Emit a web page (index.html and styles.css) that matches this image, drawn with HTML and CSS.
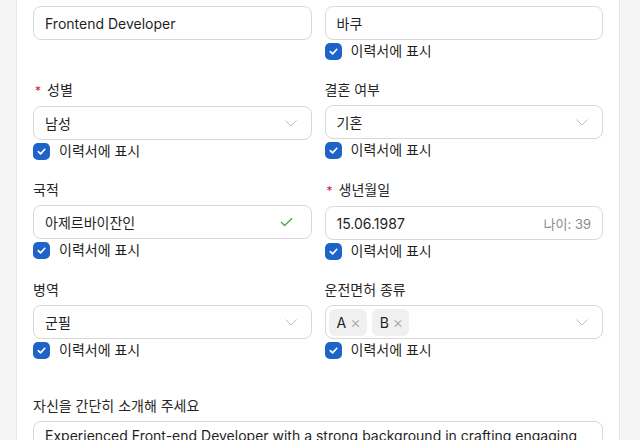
FILE: index.html
```html
<!DOCTYPE html>
<html lang="ko">
<head>
  <meta charset="UTF-8" />
  <meta name="viewport" content="width=device-width, initial-scale=1.0"/>
  <title>이력서 편집</title>
  <link rel="stylesheet" href="styles.css">
</head>
<body>

  <div class="page">
    <section class="card">

      <div class="grid">
        <div class="field">
          <div class="control">
            <span class="value">Frontend Developer</span>
          </div>
        </div>

        <div class="field">
          <div class="control">
            <span class="value">바쿠</span>
          </div>
          <div class="show"><span class="box"><svg viewBox="0 0 12 12" width="11" height="11"><path d="M2.5 6.2 L5 8.6 L9.6 3.6" fill="none" stroke="#fff" stroke-width="1.8" stroke-linecap="round" stroke-linejoin="round"/></svg></span>이력서에 표시</div>
        </div>

        <div class="field">
          <label><span class="req">*</span>성별</label>
          <div class="control">
            <span class="value">남성</span>
            <svg class="chev" viewBox="0 0 12 7" width="12" height="7"><path d="M0.5 0.5 L6 6 L11.5 0.5" fill="none" stroke="#bfbfbf" stroke-width="1"/></svg>
          </div>
          <div class="show"><span class="box"><svg viewBox="0 0 12 12" width="11" height="11"><path d="M2.5 6.2 L5 8.6 L9.6 3.6" fill="none" stroke="#fff" stroke-width="1.8" stroke-linecap="round" stroke-linejoin="round"/></svg></span>이력서에 표시</div>
        </div>

        <div class="field">
          <label>결혼 여부</label>
          <div class="control">
            <span class="value">기혼</span>
            <svg class="chev" viewBox="0 0 12 7" width="12" height="7"><path d="M0.5 0.5 L6 6 L11.5 0.5" fill="none" stroke="#bfbfbf" stroke-width="1"/></svg>
          </div>
          <div class="show"><span class="box"><svg viewBox="0 0 12 12" width="11" height="11"><path d="M2.5 6.2 L5 8.6 L9.6 3.6" fill="none" stroke="#fff" stroke-width="1.8" stroke-linecap="round" stroke-linejoin="round"/></svg></span>이력서에 표시</div>
        </div>

        <div class="field">
          <label>국적</label>
          <div class="control">
            <span class="value">아제르바이잔인</span>
            <svg class="ok" viewBox="0 0 14 10" width="13" height="10"><path d="M1 5 L5 8.8 L13 1" fill="none" stroke="#52a447" stroke-width="1.4"/></svg>
          </div>
          <div class="show"><span class="box"><svg viewBox="0 0 12 12" width="11" height="11"><path d="M2.5 6.2 L5 8.6 L9.6 3.6" fill="none" stroke="#fff" stroke-width="1.8" stroke-linecap="round" stroke-linejoin="round"/></svg></span>이력서에 표시</div>
        </div>

        <div class="field">
          <label><span class="req">*</span>생년월일</label>
          <div class="control">
            <span class="value">15.06.1987</span>
            <span class="suffix">나이: 39</span>
          </div>
          <div class="show"><span class="box"><svg viewBox="0 0 12 12" width="11" height="11"><path d="M2.5 6.2 L5 8.6 L9.6 3.6" fill="none" stroke="#fff" stroke-width="1.8" stroke-linecap="round" stroke-linejoin="round"/></svg></span>이력서에 표시</div>
        </div>

        <div class="field">
          <label>병역</label>
          <div class="control">
            <span class="value">군필</span>
            <svg class="chev" viewBox="0 0 12 7" width="12" height="7"><path d="M0.5 0.5 L6 6 L11.5 0.5" fill="none" stroke="#bfbfbf" stroke-width="1"/></svg>
          </div>
          <div class="show"><span class="box"><svg viewBox="0 0 12 12" width="11" height="11"><path d="M2.5 6.2 L5 8.6 L9.6 3.6" fill="none" stroke="#fff" stroke-width="1.8" stroke-linecap="round" stroke-linejoin="round"/></svg></span>이력서에 표시</div>
        </div>

        <div class="field">
          <label>운전면허 종류</label>
          <div class="control tags">
            <span class="tag">A<span class="x">×</span></span>
            <span class="tag">B<span class="x">×</span></span>
            <svg class="chev" viewBox="0 0 12 7" width="12" height="7"><path d="M0.5 0.5 L6 6 L11.5 0.5" fill="none" stroke="#bfbfbf" stroke-width="1"/></svg>
          </div>
          <div class="show"><span class="box"><svg viewBox="0 0 12 12" width="11" height="11"><path d="M2.5 6.2 L5 8.6 L9.6 3.6" fill="none" stroke="#fff" stroke-width="1.8" stroke-linecap="round" stroke-linejoin="round"/></svg></span>이력서에 표시</div>
        </div>
      </div>

      <div class="field about">
        <label>자신을 간단히 소개해 주세요</label>
        <div class="textarea">Experienced Front-end Developer with a strong background in crafting engaging</div>
      </div>

    </section>
  </div>

</body>
</html>
```

FILE: styles.css
```css
body {
  margin: 0;
  background-color: #f5f5f5;
  font-family: Inter, "Noto Sans CJK KR", sans-serif;
  font-size: 14px;
  color: #1f1f1f;
  overflow: hidden;
}

.page {
  padding: 0 20px 0 16px;
}

/* the form is scrolled, its top edge sits above the fold */
.card {
  margin-top: -11px;
  background-color: #fff;
  border: 1px solid #e6e6e6;
  padding: 16px 16px 40px;
}

.grid {
  display: grid;
  grid-template-columns: 1fr 1fr;
  column-gap: 13px;
  row-gap: 18px;
}

.field label {
  display: block;
  line-height: 22px;
  margin-bottom: 4px;
  color: #262626;
}

.req {
  color: #d4183d;
  font-size: 12px;
  margin: 0 6px 0 2px;
}

.control {
  display: flex;
  align-items: center;
  height: 34px;
  box-sizing: border-box;
  border: 1px solid #d9d9d9;
  border-radius: 8px;
  padding: 0 14px 0 11px;
  background-color: #fff;
}

.control .value {
  flex: 1;
}

.chev {
  margin-left: auto;
}

.ok {
  margin-right: 4px;
}

.suffix {
  color: #8c8c8c;
  font-size: 13px;
  margin-right: -3px;
}

.control.tags {
  padding-left: 3px;
  gap: 5px;
}

.tag {
  display: inline-flex;
  align-items: center;
  height: 27px;
  padding: 0 6px 0 8px;
  background-color: #f0f0f0;
  border-radius: 6px;
}

.tag .x {
  color: #a6a6a6;
  font-size: 16px;
  font-weight: 300;
  margin-left: 4px;
}

.show {
  display: flex;
  align-items: center;
  gap: 9px;
  height: 20px;
  margin-top: 1px;
  line-height: 20px;
}

.box {
  display: inline-flex;
  align-items: center;
  justify-content: center;
  width: 17px;
  height: 17px;
  border-radius: 5px;
  background-color: #1e63c8;
}

.about {
  margin-top: 35px;
}

.textarea {
  border: 1px solid #d9d9d9;
  border-radius: 8px;
  padding: 3px 11px;
  line-height: 22px;
  min-height: 80px;
  white-space: nowrap;
  overflow: hidden;
}
```
